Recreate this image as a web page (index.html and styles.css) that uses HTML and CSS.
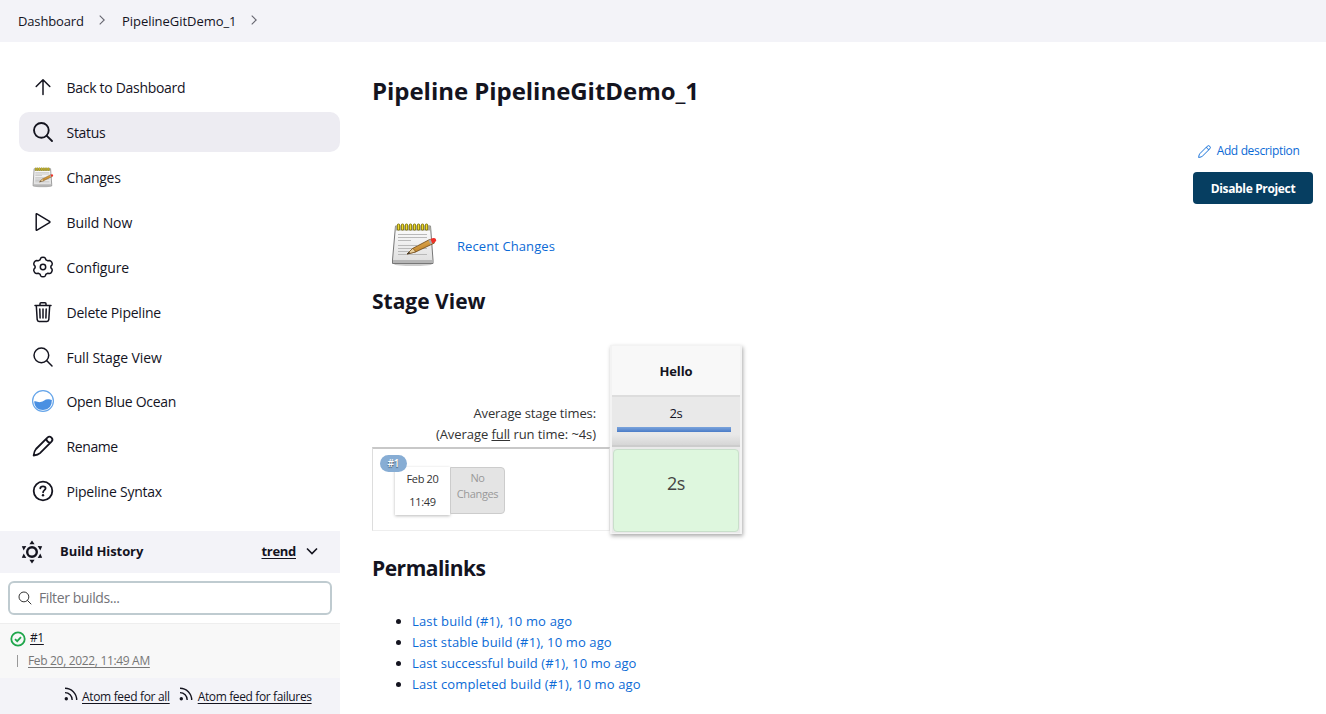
FILE: index.html
```html
<!DOCTYPE html>
<html lang="en">
<head>
<meta charset="utf-8">
<title>PipelineGitDemo_1 [Jenkins]</title>
<link rel="stylesheet" href="styles.css">
</head>
<body>
<svg class="defs" width="0" height="0" aria-hidden="true">
  <defs>
    <linearGradient id="paper" x1="0" y1="0" x2="0" y2="1"><stop offset="0" stop-color="#fdfdfd"/><stop offset="1" stop-color="#dedede"/></linearGradient>
    <linearGradient id="wood" x1="0" y1="0" x2="0.5" y2="1"><stop offset="0" stop-color="#f0bd62"/><stop offset="1" stop-color="#b87a22"/></linearGradient>
    <symbol id="notepad" viewBox="0 0 48 48">
      <ellipse cx="23" cy="44.3" rx="19" ry="1.8" fill="#000" opacity=".2"/>
      <path d="M5.500 6h35L43 40v3.500H2.500V40z" fill="url(#paper)" stroke="#777"/>
      <path d="M5.500 6h35l.5 4.500H5z" fill="#a9a99f"/>
      <path d="M3 40h39.500v3H3z" fill="#b5b5b5"/>
      <path d="M8 14.500h29M8 17.500h29M8 20.500h13M8 25.500h19M8 28.500h29M8 31.500h11M8 34.500h29" stroke="#b9b9b9"/>
      <path d="M8.500 5v4M12.500 5v4M16.500 5v4M20.500 5v4M24.500 5v4M28.500 5v4M32.500 5v4M36.500 5v4" stroke="#756900" stroke-width="3" stroke-linecap="round"/>
      <path d="M8.500 5v4M12.500 5v4M16.500 5v4M20.500 5v4M24.500 5v4M28.500 5v4M32.500 5v4M36.500 5v4" stroke="#eedb37" stroke-width="1.600" stroke-linecap="round"/>
      <path d="M17 34l5.500-5.500L40 19.300q3.500 0 4.500 3.700L25.500 32z" fill="url(#wood)" stroke="#6b4514" stroke-width=".8"/>
      <path d="M17 34l5.500-5.500q2.500 1 3 3.500z" fill="#e9cf9c" stroke="#6b4514" stroke-width=".6"/>
      <path d="M17 34l2-2 1.300 1.200z" fill="#222"/>
      <path d="M38.500 20l2.200-1.100 1.800 4.400-2.200 1.100z" fill="#aaa"/>
      <path d="M40.500 18.900q4-2 5.300 0t-.7 3.200L42.300 23.400z" fill="#ef3029"/>
    </symbol>
    <symbol id="search" viewBox="0 0 512 512"><path d="M221 64a157 157 0 10157 157A157 157 0 00221 64z" fill="none" stroke="currentColor"/><path d="M338 338l110 110" fill="none" stroke="currentColor" stroke-linecap="round"/></symbol>
    <symbol id="pencil" viewBox="0 0 24 24"><path d="M2.600 21.500C3 18.500 3.600 16.500 5 15L16.400 3.600a2.900 2.900 0 014.100 4.100L9 19.100c-1.500 1.400-3.400 2-6.400 2.400zM15.300 4.700c.3 2.300 1.800 3.900 4.100 4.100" fill="none" stroke="currentColor" stroke-linejoin="round"/></symbol>
    <symbol id="feed" viewBox="0 0 14 14"><circle cx="2.300" cy="11.700" r="1.700" fill="currentColor"/><path d="M1 5.600a7.200 7.200 0 017.200 7.400M1 1.200A11.700 11.700 0 0112.700 13" fill="none" stroke="currentColor" stroke-width="1.400"/></symbol>
  </defs>
</svg>

<nav class="breadcrumbs">
  <a class="crumb crumb-home">Dashboard</a>
  <svg class="crumb-arrow" viewBox="0 0 6 10"><path d="M.7.700L5.200 5 .7 9.300"/></svg>
  <a class="crumb crumb-job">PipelineGitDemo_1</a>
  <svg class="crumb-arrow" viewBox="0 0 6 10"><path d="M.7.700L5.200 5 .7 9.300"/></svg>
</nav>

<div class="page">
  <aside class="side">
    <div class="tasks">
      <a class="task"><svg class="icon" viewBox="0 0 24 24"><path d="M12 19.500V4.800M5.200 11.500L12 4.700l6.800 6.800"/></svg><span class="t-back">Back to Dashboard</span></a>
      <a class="task active"><svg class="icon glass bold"><use href="#search"/></svg><span class="t-status">Status</span></a>
      <a class="task"><svg class="icon pad"><use href="#notepad"/></svg><span class="t-changes">Changes</span></a>
      <a class="task"><svg class="icon" viewBox="0 0 24 24"><path d="M5.200 4.200v15.600q0 .8.800.4l12.500-7.500q.8-.7 0-1.400L6 3.800q-.8-.4-.8.400z"/></svg><span class="t-build">Build Now</span></a>
      <a class="task"><svg class="icon" viewBox="0 0 24 24"><circle cx="12" cy="12" r="2.700"/><path d="M9.700 3.200Q10.300 2.300 12 2.300t2.300.9l.7 1.700 1.500.8 2.200-.2q1.100.2 2 1.700t.4 2.500L19.900 11.200v1.600l1.200 1.500q.4 1-.4 2.500t-2 1.700l-2.200-.2-1.500.8-.7 1.700q-.6.900-2.300.9t-2.300-.9l-.7-1.700-1.500-.8-2.200.2q-1.100-.2-2-1.700t-.4-2.500l1.200-1.500v-1.600L2.900 9.700q-.4-1 .4-2.500t2-1.700l2.200.2L9 4.900z"/></svg><span class="t-conf">Configure</span></a>
      <a class="task"><svg class="icon" viewBox="0 0 24 24"><path d="M4 5.500h16M5.300 5.500l.9 14.200q.2 1.800 1.800 1.800h8q1.600 0 1.800-1.800l.9-14.200M9 5.300V3.700q0-1 1-1h4q1 0 1 1v1.600M12 9v9M8.800 9l.3 9M15.200 9l-.3 9"/></svg><span class="t-del">Delete Pipeline</span></a>
      <a class="task"><svg class="icon glass"><use href="#search"/></svg><span class="t-full">Full Stage View</span></a>
      <a class="task"><svg class="icon" viewBox="0 0 24 24"><circle class="ocean-ring" cx="12" cy="12" r="10.400"/><path class="ocean-wave" d="M3.100 12.500c2.400-.8 3.600 1 6.300.6 3.200-.5 4.600-2.900 7.600-2.800 1.600 0 2.500.6 3.900.8q.2 9.600-8.900 9.900-8.400-.2-8.900-8.500z"/></svg><span class="t-ocean">Open Blue Ocean</span></a>
      <a class="task"><svg class="icon bold"><use href="#pencil"/></svg><span class="t-rename">Rename</span></a>
      <a class="task"><svg class="icon bold" viewBox="0 0 24 24"><circle cx="12" cy="12" r="9.300"/><path d="M9.300 9.300q.2-2 2.700-2t2.600 2c0 1.800-2.500 1.900-2.500 4"/><circle class="dot" cx="12" cy="16.300" r="1.200"/></svg><span class="t-syntax">Pipeline Syntax</span></a>
    </div>

    <section class="history">
      <header class="history-head">
        <svg class="sun" viewBox="0 0 24 24"><circle cx="12" cy="12" r="4.800"/><path d="M12 .5l2.600 3.700H9.400zM12 23.500l2.600-3.700H9.400zM1.800 6.200l4.500-.2-2.600 4.400zM22.200 6.200l-4.500-.2 2.600 4.400zM1.800 17.800l4.500.2-2.600-4.400zM22.200 17.800l-4.500.2 2.600-4.400z"/></svg>
        <strong class="history-title">Build History</strong>
        <a class="trend">trend</a>
        <svg class="chevron" viewBox="0 0 12 8"><path d="M1 1.500l5 5 5-5"/></svg>
      </header>
      <div class="filter"><svg class="filter-icon"><use href="#search"/></svg><span class="filter-text">Filter builds...</span></div>
      <div class="build">
        <div class="build-line"><svg class="ok" viewBox="0 0 16 16"><circle cx="8" cy="8" r="6.700"/><path d="M5 8.200l2.200 2 3.800-4"/></svg><a class="build-num">#1</a></div>
        <div class="build-when"><i class="tick"></i><a class="build-date">Feb 20, 2022, 11:49 AM</a></div>
      </div>
      <footer class="feeds">
        <svg class="feed-icon"><use href="#feed"/></svg><a class="feed-all">Atom feed for all</a>
        <svg class="feed-icon second"><use href="#feed"/></svg><a class="feed-fail">Atom feed for failures</a>
      </footer>
    </section>
  </aside>

  <main class="main">
    <h1><span>Pipeline PipelineGitDemo_1</span></h1>
    <div class="actions">
      <a class="describe"><svg class="describe-icon"><use href="#pencil"/></svg><span class="describe-text">Add description</span></a>
      <button class="disable"><span>Disable Project</span></button>
    </div>
    <div class="recent"><svg class="recent-icon"><use href="#notepad"/></svg><a class="recent-text">Recent Changes</a></div>
    <h2 class="h-stage"><span>Stage View</span></h2>
    <div class="stages">
      <div class="runs">
        <div class="averages"><span class="avg1">Average stage times:</span><span class="avg2">(Average <u>full</u> run time: ~4s)</span></div>
        <div class="run">
          <div class="run-card">
            <div class="run-time"><span class="run-day">Feb 20</span><span>11:49</span></div>
            <div class="run-changes"><span>No</span><span>Changes</span></div>
            <span class="badge">#1</span>
          </div>
        </div>
      </div>
      <div class="stage">
        <div class="stage-name"><span>Hello</span></div>
        <div class="stage-avg"><span>2s</span><i class="bar"></i></div>
        <div class="stage-cell"><span>2s</span></div>
      </div>
    </div>
    <h2 class="h-perma"><span>Permalinks</span></h2>
    <ul class="links">
      <li><a class="l1">Last build (#1), 10 mo ago</a></li>
      <li><a class="l2">Last stable build (#1), 10 mo ago</a></li>
      <li><a class="l3">Last successful build (#1), 10 mo ago</a></li>
      <li><a class="l4">Last completed build (#1), 10 mo ago</a></li>
    </ul>
  </main>
</div>
</body>
</html>
```

FILE: styles.css
```css
* { box-sizing: border-box; }
body { margin: 0; height: 714px; overflow: hidden; background: #fff; color: #14141f; font: 14px/20px "Open Sans", "Noto Sans", sans-serif; }
.defs { position: absolute; }
span, a { white-space: nowrap; }

.breadcrumbs { height: 42px; padding-left: 18px; display: flex; align-items: center; background: #f3f3f8; font-size: 13px; }
.crumb-home { width: 65px; letter-spacing: -.15px; }
.crumb-job { width: 114px; letter-spacing: -.05px; }
.crumb-arrow { width: 6px; height: 10px; margin: 0 16px; fill: none; stroke: #666670; stroke-width: 1.1; transform: translateY(-1px); }
.crumb-job { margin-left: 1px; }
.crumb-job + .crumb-arrow { margin-left: 15px; }

.page { display: flex; height: 672px; }
.side { width: 340px; display: flex; flex-direction: column; }
.tasks { height: 489px; padding: 25px 0 0 19px; }
.task { display: flex; align-items: center; height: 40px; margin-bottom: 4.9px; padding: 2.4px 0 0 12px; border-radius: 10px; font-size: 14px; }
.task.active { background: #edecf2; }
.icon { width: 24px; height: 24px; margin-right: 11.500px; fill: none; stroke: currentColor; stroke-width: 1.5; stroke-linecap: round; stroke-linejoin: round; flex: none; margin-top: -2px; }
.icon.bold { stroke-width: 1.8; }
.glass { stroke-width: 32; }
.icon.glass.bold { stroke-width: 40; }
.icon.glass { stroke-width: 32; }
.task .pad { padding: 1px; stroke: none; }
.dot { fill: currentColor; stroke: none; }
.ocean-ring { stroke: #65a5ea; stroke-width: 1.2; fill: #fff; }
.ocean-wave { fill: #4a90e2; stroke: none; }
.t-back { letter-spacing: -.3px; }
.t-status { letter-spacing: -.3px; }
.t-changes { letter-spacing: -.25px; }
.t-build { letter-spacing: -.12px; }
.t-conf { letter-spacing: -.15px; }
.t-del { letter-spacing: -.22px; }
.t-full { letter-spacing: -.1px; }
.t-ocean { letter-spacing: -.3px; }
.t-rename { letter-spacing: -.4px; }
.t-syntax { letter-spacing: -.23px; }

.history-head { height: 42px; background: #f3f3f8; display: flex; align-items: center; padding: 0 22px 2px 20px; }
.sun { width: 24px; height: 24px; fill: currentColor; margin-right: 16px; margin-top: 2px; }
.sun circle { fill: none; stroke: currentColor; stroke-width: 2.4; }
.history-title { font-size: 13px; font-weight: 700; flex: 1; letter-spacing: -.07px; }
.trend { font-size: 13px; font-weight: 700; text-decoration: underline; text-underline-offset: 2px; margin-right: 10px; letter-spacing: -.3px; }
.chevron { width: 12px; height: 8px; fill: none; stroke: currentColor; stroke-width: 1.600; }
.filter { margin: 8px 8px 8px; height: 34px; border: 2px solid #bfcbd0; border-radius: 6px; display: flex; align-items: center; padding-left: 7px; color: #737378; }
.filter-icon { width: 16px; height: 16px; color: #333; margin-right: 6px; stroke-width: 32; }
.filter-text { font-size: 14px; letter-spacing: -.4px; }
.build { height: 55px; border-top: 1px solid #eee; background: #f8f8f8; padding: 4px 0 0 10px; }
.build-line { display: flex; height: 20px; align-items: center; font-size: 12px; }
.ok { width: 16px; height: 16px; margin: 2px 4px 0 0; fill: none; stroke: #1ea64b; stroke-width: 1.8; }
.build-num, .build-date, .feeds a { text-decoration: underline; text-underline-offset: 2px; }
.build-num { letter-spacing: -.4px; }
.build-when { display: flex; align-items: center; height: 22px; margin-top: 2px; font-size: 12px; color: #777; letter-spacing: -.33px; }
.tick { width: 1px; height: 12px; background: #999; margin: 0 10px 0 7px; }
.feeds { height: 36px; background: #f3f3f8; display: flex; align-items: center; padding: 2px 0 0 64px; font-size: 12px; letter-spacing: -.33px; }
.feed-icon { width: 14px; height: 14px; margin: -6px 4px 0 0; }
.feed-icon.second { margin-left: 9px; margin-right: 5px; }
.feed-fail { letter-spacing: -.37px; }

.main { width: 986px; padding: 34px 13px 0 32px; }
h1, h2 { margin: 0; font-weight: 700; }
h1 { height: 66px; font-size: 24px; line-height: 30px; letter-spacing: -.04px; }
h2 { font-size: 21px; line-height: 28px; }
.actions { height: 62px; display: flex; flex-direction: column; align-items: flex-end; }
.describe, .recent a, .links a { color: #0b6ad6; }
.describe { display: flex; height: 18px; align-items: center; margin-right: 13.500px; font-size: 12px; letter-spacing: -.35px; }
.describe-icon { width: 15px; height: 15px; margin-right: 5px; stroke-width: 1.500; }
.disable { width: 120px; height: 32px; margin-top: 12px; padding: 1px 0 0; border: 0; border-radius: 4px; background: #063e61; color: #fff; font: 700 12px/31px "Open Sans", sans-serif; letter-spacing: -.35px; }
.recent { height: 83px; padding: 1px 0 0 18px; display: flex; align-items: center; font-size: 13px; letter-spacing: .09px; }
.recent-icon { width: 48px; height: 48px; margin-right: 19px; margin-top: -5px; }
.recent a { margin-top: -1px; }

.stages { display: flex; height: 190px; margin-top: 30px; }
.runs { width: 238px; }
.averages { height: 102px; padding: 58px 14px 0 0; display: flex; flex-direction: column; align-items: flex-end; color: #333; font-size: 13px; line-height: 21px; }
.avg1 { letter-spacing: -.12px; }
.avg2 { letter-spacing: -.07px; }
.run { height: 84px; border: 1px solid #eee; border-top: 2px solid #c8c8c8; border-left-color: #ddd; padding: 18px 0 0 22px; }
.run-card { position: relative; display: flex; width: 110px; height: 48px; }
.run-time, .run-changes { width: 55px; text-align: center; font-size: 11px; display: flex; flex-direction: column; align-items: center; letter-spacing: -.35px; }
.run-time { box-shadow: 0 1px 3px #bbb; line-height: 23px; color: #333; }
.run-changes { background: #e4e4e4; border: 1px solid #ccc; border-radius: 0 4px 4px 0; line-height: 16px; padding-top: 2px; color: #999; height: 47px; }
.badge { position: absolute; left: -15px; top: -12px; width: 27px; height: 17px; border-radius: 9px; background: #87add4; color: #fff; font-size: 10px; line-height: 17px; text-align: center; font-weight: 600; text-shadow: 0 1px 1px #456; }
.stage { width: 132px; height: 189px; border: 2px solid #f3f3f3; border-width: 1px 2px; box-shadow: 1px 2px 4px #aaa; background: #eaeaea; text-align: center; }
.stage-name { height: 49px; background: #f8f8f8; font-size: 13px; font-weight: 700; line-height: 51px; letter-spacing: -.1px; }
.stage-avg { height: 52px; border-top: 2px solid #ddd; border-bottom: 2px solid #ccc; background: linear-gradient(#e9e9e9 78%, #d6d6d6); font-size: 13px; line-height: 33px; letter-spacing: -.3px; }
.stage-avg span { display: block; height: 30px; }
.bar { display: block; width: 114px; height: 5px; margin-left: 5px; background: linear-gradient(#7ba4dc, #4b7cc7); }
.stage-cell { width: 126px; height: 83px; margin: 2px 0 0 1px; background: #def7de; border: 1px solid #c9dfcb; border-radius: 4px; color: #444; font-size: 18px; line-height: 66px; letter-spacing: -.4px; }
.h-perma { margin-top: 19px; letter-spacing: -.5px; }
.links { list-style: disc; margin: 29px 0 0; padding-left: 40px; font-size: 13px; line-height: 21px; }
.l1 { letter-spacing: .17px; }
.l2 { letter-spacing: .12px; }
.l3 { letter-spacing: .09px; }
.l4 { letter-spacing: .14px; }
```
